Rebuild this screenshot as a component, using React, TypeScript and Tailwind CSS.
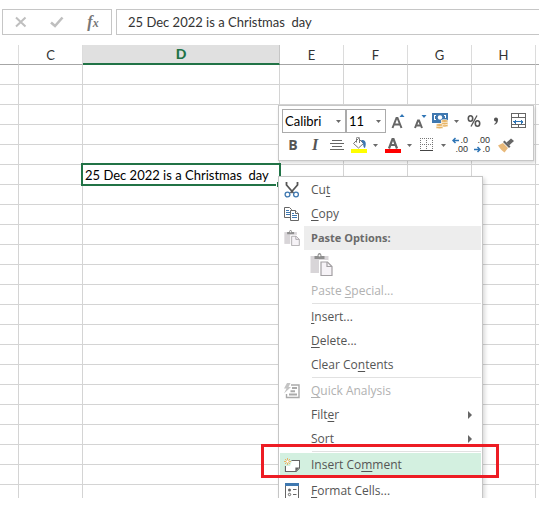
import type { ReactNode } from "react";

const columns = ["C", "D", "E", "F", "G", "H"];
const rows = Array.from({ length: 21 }, (_, i) => i);
const activeRow = 5;
const cellText = "25 Dec 2022 is a Christmas  day";

function Caret() {
  return (
    <svg width="5" height="3" viewBox="0 0 5 3" className="shrink-0" aria-hidden="true">
      <path d="M0 0h5L2.500 3z" fill="#6a6a6a" />
    </svg>
  );
}

function FormulaBar() {
  return (
    <div className="flex gap-1 pt-[9px] pl-0.5">
      <div className="flex h-[26px] w-[110px] shrink-0 items-center border border-[#c6c6c6] text-[#bfbfbf]">
        <button type="button" aria-label="Cancel" className="flex w-9 justify-center">
          <svg width="12" height="12" viewBox="0 0 12 12" fill="none" stroke="currentColor" strokeWidth="2">
            <path d="M1 1.500 10.500 10.500M10.500 1.500 1 10.500" />
          </svg>
        </button>
        <button type="button" aria-label="Enter" className="flex w-9 justify-center">
          <svg width="14" height="12" viewBox="0 0 14 12" fill="none" stroke="currentColor" strokeWidth="2.600">
            <path d="M1 6.500 5 10 12.500 1.500" />
          </svg>
        </button>
        <button
          type="button"
          aria-label="Insert function"
          className="flex w-9 items-baseline justify-center font-['Liberation_Serif',serif] text-base leading-6 font-bold text-[#777] italic"
        >
          f<span className="text-xs">x</span>
        </button>
      </div>
      <input
        aria-label="Formula"
        defaultValue={cellText}
        className="h-[26px] min-w-0 flex-1 border-y border-l border-[#c6c6c6] bg-white pl-[11px] text-[13px] text-[#333] outline-none"
      />
    </div>
  );
}

function Grid() {
  return (
    <table className="w-full table-fixed border-separate border-spacing-0">
      <colgroup>
        <col className="w-[19px]" />
        <col className="w-16" />
        <col className="w-[197px]" />
        <col className="w-16" />
        <col className="w-16" />
        <col className="w-16" />
        <col className="w-16" />
        <col />
      </colgroup>
      <thead>
        <tr className="h-5 text-[13px] leading-4 text-[#333]">
          <td className="border-r border-b border-r-[#dcdcdc] border-b-[#a6a6a6] p-0" />
          {columns.map((name) =>
            name === "D" ? (
              <th key={name} className="border-r border-b-2 border-r-[#c6c6c6] border-b-[#217346] bg-[#e0e0e0] p-0 text-sm leading-4 font-black text-[#217346]">
                {name}
              </th>
            ) : (
              <th key={name} className="border-r border-b border-r-[#dcdcdc] border-b-[#a6a6a6] p-0 font-normal">
                {name}
              </th>
            ),
          )}
          <td className="border-b border-[#a6a6a6] p-0" />
        </tr>
      </thead>
      <tbody>
        {rows.map((row) => (
          <tr key={row} className="h-5">
            <td className="border-r border-b border-[#d4d4d4] p-0" />
            {columns.map((name) =>
              name === "D" && row === activeRow ? (
                <td key={name} className="relative border-r border-b border-[#d4d4d4] p-0 pl-0.5 text-[13px] leading-4 whitespace-pre text-black">
                  {cellText}
                  <span className="pointer-events-none absolute -inset-0.5 border-2 border-[#217346]">
                    <span className="absolute -right-[3px] -bottom-[3px] size-1.5 border-t border-l border-white bg-[#217346]" />
                  </span>
                </td>
              ) : (
                <td key={name} className="border-r border-b border-[#d4d4d4] p-0" />
              ),
            )}
            <td className="border-b border-[#d4d4d4] p-0" />
          </tr>
        ))}
        <tr className="h-[13px]">
          <td className="border-r border-[#d4d4d4] p-0" />
          {columns.map((name) => (
            <td key={name} className="border-r border-[#d4d4d4] p-0" />
          ))}
          <td className="p-0" />
        </tr>
      </tbody>
    </table>
  );
}

function Picker({ label, value, width }: { label: string; value: string; width: string }) {
  return (
    <label className={`relative flex h-6 items-center border border-[#ababab] bg-white ${width}`}>
      <select aria-label={label} className="w-full appearance-none bg-transparent pl-0.5 text-[13px] leading-5 text-black outline-none">
        <option>{value}</option>
      </select>
      <span className="pointer-events-none absolute right-1">
        <Caret />
      </span>
    </label>
  );
}

function Tool({ label, width, children }: { label: string; width: string; children: ReactNode }) {
  return (
    <button type="button" aria-label={label} className={`flex h-6 shrink-0 items-center justify-center ${width}`}>
      {children}
    </button>
  );
}

function SplitTool({ label, children }: { label: string; children: ReactNode }) {
  return (
    <button type="button" aria-label={label} className="flex h-6 w-8 shrink-0 items-center gap-1.5 pl-0.5">
      {children}
      <Caret />
    </button>
  );
}

function DecimalIcon({ increase }: { increase: boolean }) {
  return (
    <span className="relative flex w-4 flex-col items-end font-['Liberation_Sans',sans-serif] text-[9px] leading-[9px] text-[#333]">
      <span>{increase ? ".0" : ".00"}</span>
      <span>{increase ? ".00" : ".0"}</span>
      <svg
        width="7"
        height="7"
        viewBox="0 0 7 7"
        fill="none"
        stroke="#2f75b5"
        strokeWidth="1.500"
        className={`absolute left-0 ${increase ? "top-px" : "bottom-px"}`}
      >
        {increase ? <path d="M7 3.500H1M3.500 1 1 3.500 3.500 6" /> : <path d="M0 3.500h6M3.500 1 6 3.500 3.500 6" />}
      </svg>
    </span>
  );
}

function MiniToolbar() {
  return (
    <div
      role="toolbar"
      aria-label="Formatting"
      className="absolute top-[60px] left-[278px] flex h-14 w-64 flex-col border border-[#c6c6c6] bg-white pt-[3px] shadow-[1px_2px_3px_rgba(0,0,0,0.150)]"
    >
      <div className="flex pl-[3px]">
        <Picker label="Font" value="Calibri" width="w-16" />
        <Picker label="Font size" value="11" width="w-10" />
        <Tool label="Increase font size" width="w-6">
          <svg width="14" height="16" viewBox="0 0 14 16">
            <path d="M1.500 15 5.500 5h1l4 10M3 11.500h6" fill="none" stroke="#666" strokeWidth="2" />
            <path d="M8.500 4 11 1l2.500 3z" fill="#2f75b5" />
          </svg>
        </Tool>
        <Tool label="Decrease font size" width="w-5">
          <svg width="14" height="16" viewBox="0 0 14 16">
            <path d="M2 15 5 7.500h1L9 15M3 12.500h5" fill="none" stroke="#666" strokeWidth="2" />
            <path d="M8.500 2h5L11 5z" fill="#2f75b5" />
          </svg>
        </Tool>
        <SplitTool label="Accounting format">
          <svg width="16" height="16" viewBox="0 0 16 16">
            <path d="M0 0h16v9h-4V7H9v3H0z" fill="#3f78b0" />
            <path d="M2 2h2v1H3v3h1v1H2zM12 2h2v3h-1V3h-1z" fill="#fff" />
            <circle cx="8" cy="4.500" r="2.200" fill="#fff" />
            <g fill="#e8b566" stroke="#fff" strokeWidth="0.600">
              <ellipse cx="12.500" cy="12.500" rx="3.500" ry="1.500" />
              <ellipse cx="12.500" cy="10.300" rx="3.500" ry="1.500" />
              <ellipse cx="12.500" cy="8" rx="3.500" ry="1.500" />
              <ellipse cx="7.500" cy="14.300" rx="3.500" ry="1.500" />
              <ellipse cx="7.500" cy="12" rx="3.500" ry="1.500" />
            </g>
          </svg>
        </SplitTool>
        <Tool label="Percent style" width="w-6">
          <svg width="14" height="14" viewBox="0 0 14 14" fill="none" stroke="#555" strokeWidth="1.600">
            <ellipse cx="3.500" cy="4.500" rx="2.200" ry="2.800" />
            <ellipse cx="10.500" cy="9.500" rx="2.200" ry="2.800" />
            <path d="M10 1.500 4 12.500" strokeWidth="1.300" />
          </svg>
        </Tool>
        <Tool label="Comma style" width="w-5">
          <svg width="6" height="8" viewBox="0 0 6 8" fill="#555">
            <path d="M1 2.500a2 2 0 0 1 4-.2C5.200 5 4 7 1.500 7.800L1.200 7C2.500 6.300 3 5.500 3 4.500 1.800 4.600 1 3.700 1 2.500z" />
          </svg>
        </Tool>
        <Tool label="Merge and centre" width="w-6">
          <svg width="16" height="16" viewBox="0 0 16 16" fill="none" stroke="#666" shapeRendering="crispEdges">
            <path d="M1 .5h14v14H1zM1 4.500h14M1 11.500h14M8.500 1v3.500M8.500 11.500V15" />
            <path d="M3 8.500h10M5 6.500v4M4 7.500v2M11 6.500v4M12 7.500v2" stroke="#2f75b5" />
          </svg>
        </Tool>
      </div>
      <div className="flex pl-0.5">
        <Tool label="Bold" width="w-6">
          <span className="font-['Open_Sans',sans-serif] text-sm leading-5 font-bold text-[#555]">B</span>
        </Tool>
        <Tool label="Italic" width="w-5">
          <span className="font-['Liberation_Serif',serif] text-base leading-5 font-bold text-[#555] italic">I</span>
        </Tool>
        <Tool label="Centre" width="w-6">
          <svg width="14" height="11" viewBox="0 0 14 11" stroke="#666" shapeRendering="crispEdges">
            <path d="M2 .5h10M0 3.500h14M2 6.500h10M0 9.500h14" />
          </svg>
        </Tool>
        <SplitTool label="Fill colour">
          <svg width="16" height="16" viewBox="0 0 16 16">
            <path d="M7.500 1.500 12.500 6.500 7.500 11 2.500 6.500z" fill="#fff" stroke="#777" />
            <path d="M5.500 5.500V1.500a1.500 1.500 0 0 1 3 0V6" fill="none" stroke="#777" />
            <path d="M10 3c4-.5 6 2 4 8-2-.5-1.500-3-2-4.500z" fill="#3f78b0" />
            <path d="M0 12h16v4H0z" fill="#ff0" />
          </svg>
        </SplitTool>
        <div className="w-0.5" />
        <SplitTool label="Font colour">
          <svg width="16" height="16" viewBox="0 0 16 16">
            <path d="M4 11.500 7.500 2h1L12 11.500M5.500 8h5" fill="none" stroke="#666" strokeWidth="2.200" />
            <path d="M0 12h16v4H0z" fill="#f00" />
          </svg>
        </SplitTool>
        <div className="w-0.5" />
        <SplitTool label="Borders">
          <svg width="16" height="16" viewBox="0 0 16 16" stroke="#777" shapeRendering="crispEdges">
            <path d="M1 1.500h13M1 7.500h13M1.500 1v12M7.500 1v12M13.500 1v12" strokeDasharray="1 1" />
            <path d="M1 13.500h13" stroke="#444" />
          </svg>
        </SplitTool>
        <Tool label="Increase decimal" width="w-[22px]">
          <DecimalIcon increase />
        </Tool>
        <Tool label="Decrease decimal" width="w-[22px]">
          <DecimalIcon increase={false} />
        </Tool>
        <Tool label="Format painter" width="w-[26px]">
          <svg width="16" height="15" viewBox="0 0 16 15">
            <path d="M0 7.500 5 5l5 5-3.500 4.500C4.500 13 2 11 0 7.500z" fill="#e8b97a" />
            <path d="m5 4 1.500-1.500 6 6L11 10z" fill="#666" />
            <path d="m8.500 4.500 4.500-4 3 2.500-5 4.500z" fill="#666" />
          </svg>
        </Tool>
      </div>
    </div>
  );
}

function CutIcon() {
  return (
    <svg width="16" height="16" viewBox="0 0 16 16" fill="none">
      <path d="M2.500 0v3L9.500 11M13.500 0v3L6.500 11" stroke="#555" strokeWidth="1.800" />
      <circle cx="3.500" cy="12.500" r="2.400" stroke="#3f78b0" strokeWidth="1.300" />
      <circle cx="12" cy="12.500" r="2.400" stroke="#3f78b0" strokeWidth="1.300" />
    </svg>
  );
}

function CopyIcon() {
  return (
    <svg width="16" height="14" viewBox="0 0 16 14" fill="#fff" stroke="#666">
      <path d="M.5.5h5l2 2v8h-7z" />
      <path d="M2 3.500h3M2 5.500h4M2 7.500h4" stroke="#3f78b0" />
      <path d="M6.500 3.500h5l3 3v7h-8z" />
      <path d="M11.500 3.500v3h3" />
      <path d="M8 6.500h2M8 8.500h5M8 10.500h5" stroke="#3f78b0" />
    </svg>
  );
}

function PasteIcon({ size }: { size: number }) {
  return (
    <svg width={size} height={size} viewBox="0 0 22 23" aria-hidden="true">
      <path d="M0 3h18v17H0z" fill="#d8d5d8" />
      <path d="M4 3h3c0-4 4-4 4 0h3v3H4z" fill="#8f8f8f" />
      <circle cx="9" cy="2.500" r="1" fill="#fff" />
      <path d="M10 8.500h7l4.500 4.500v9.500H10z" fill="#f6f3f7" stroke="#fff" strokeWidth="3" />
      <path d="M10.500 9h6.500l4.500 4.500v9h-11z" fill="#f6f3f7" stroke="#a3a0a3" strokeWidth="1.200" />
      <path d="M16.500 9v4.500h5" fill="none" stroke="#a3a0a3" strokeWidth="1.200" />
    </svg>
  );
}

function QuickIcon() {
  return (
    <svg width="16" height="16" viewBox="0 0 16 16" fill="none" stroke="#aaa">
      <path d="M7 2h8v12.500H2.500V11" strokeWidth="1.400" />
      <path d="M8 5h5M6.500 8.300H11M5 11.500h8" strokeWidth="2" />
      <path d="M3 0h3.500L4.500 4H7L0 10.500 2.500 5.500H0z" fill="#c4c4c4" stroke="none" />
    </svg>
  );
}

function CommentIcon() {
  return (
    <svg width="16" height="15" viewBox="0 0 16 15" fill="none">
      <path d="M7.500 2.500h7.900v7.500l-3.400 3.500H1.500V8" stroke="#666" strokeWidth="1.200" fill="none" />
      <path d="M8 3h7v7l-3 3H2V8h4z" fill="#fff" />
      <path d="M15.400 9.500h-4v4.500z" fill="#666" />
      <path d="M3.500 0v7M0 3.500h7M1 1l5 5M6 1 1 6" stroke="#e8b566" />
      <circle cx="3.500" cy="3.500" r="1.200" fill="#fff" />
    </svg>
  );
}

function FormatIcon() {
  return (
    <svg width="14" height="16" viewBox="0 0 14 16" fill="none" stroke="#666">
      <path d="M.5.5h13v15H.5z" fill="#fff" />
      <path d="M0 0h14v3H0z" fill="#3f78b0" stroke="none" />
      <circle cx="4.500" cy="7" r="1.500" fill="#666" stroke="none" />
      <circle cx="4.500" cy="11.500" r="1.200" />
      <path d="M8 6.500h3.500M8 11.500h3.500" />
    </svg>
  );
}

function Item({
  icon,
  children,
  disabled = false,
  highlighted = false,
  submenu = false,
}: {
  icon?: ReactNode;
  children: ReactNode;
  disabled?: boolean;
  highlighted?: boolean;
  submenu?: boolean;
}) {
  return (
    <button
      type="button"
      role="menuitem"
      disabled={disabled}
      className={`flex h-6 w-full shrink-0 items-center text-left ${disabled ? "text-[#b1b1b1]" : "text-[#555]"} ${highlighted ? "bg-[#d3f0e0]" : ""}`}
    >
      <span className="flex w-6 shrink-0 justify-center">{icon}</span>
      <span className="flex-1 pl-[7px]">{children}</span>
      {submenu && (
        <svg width="4" height="8" viewBox="0 0 4 8" className="mr-[9px]" aria-hidden="true">
          <path d="M0 0v8l4-4z" fill="#666" />
        </svg>
      )}
    </button>
  );
}

function Separator() {
  return <div role="separator" className="ml-8 h-0.5 shrink-0 border-t border-[#e1e1e1]" />;
}

function ContextMenu() {
  return (
    <div
      role="menu"
      className="absolute top-[131px] left-[278px] flex w-[205px] flex-col border border-[#c6c6c6] bg-white p-px font-['Open_Sans','Noto_Sans',sans-serif] text-xs leading-4 shadow-[2px_2px_4px_rgba(0,0,0,0.150)] [&_u]:underline-offset-2"
    >
      <Item icon={<CutIcon />}>Cu<u>t</u></Item>
      <Item icon={<CopyIcon />}><u>C</u>opy</Item>
      <div className="flex h-6 items-center">
        <span className="flex w-6 justify-center"><PasteIcon size={16} /></span>
        <span className="flex h-6 flex-1 items-center bg-[#ededed] pl-[7px] text-[11px] font-bold text-[#6a6a6a]">Paste Options:</span>
      </div>
      <button type="button" disabled aria-label="Paste" className="flex h-[29px] items-center pl-[30px]">
        <PasteIcon size={23} />
      </button>
      <Item disabled>Paste <u>S</u>pecial...</Item>
      <Separator />
      <Item><u>I</u>nsert...</Item>
      <Item><u>D</u>elete...</Item>
      <Item>Clear Co<u>n</u>tents</Item>
      <Separator />
      <Item icon={<QuickIcon />} disabled><u>Q</u>uick Analysis</Item>
      <Item submenu>Filt<u>e</u>r</Item>
      <Item submenu>S<u>o</u>rt</Item>
      <Separator />
      <Item icon={<CommentIcon />} highlighted>Insert Co<u>m</u>ment</Item>
      <div className="h-0.5" />
      <Item icon={<FormatIcon />}><u>F</u>ormat Cells...</Item>
    </div>
  );
}

export default function App() {
  return (
    <main className="min-h-screen bg-white font-['Lato',sans-serif]">
      <FormulaBar />
      <section className="relative mt-2.5 overflow-hidden">
        <Grid />
        <MiniToolbar />
        <ContextMenu />
        <div className="pointer-events-none absolute top-[399px] left-[261px] h-[34px] w-[238px] border-3 border-[#ed1c24]" />
      </section>
    </main>
  );
}
